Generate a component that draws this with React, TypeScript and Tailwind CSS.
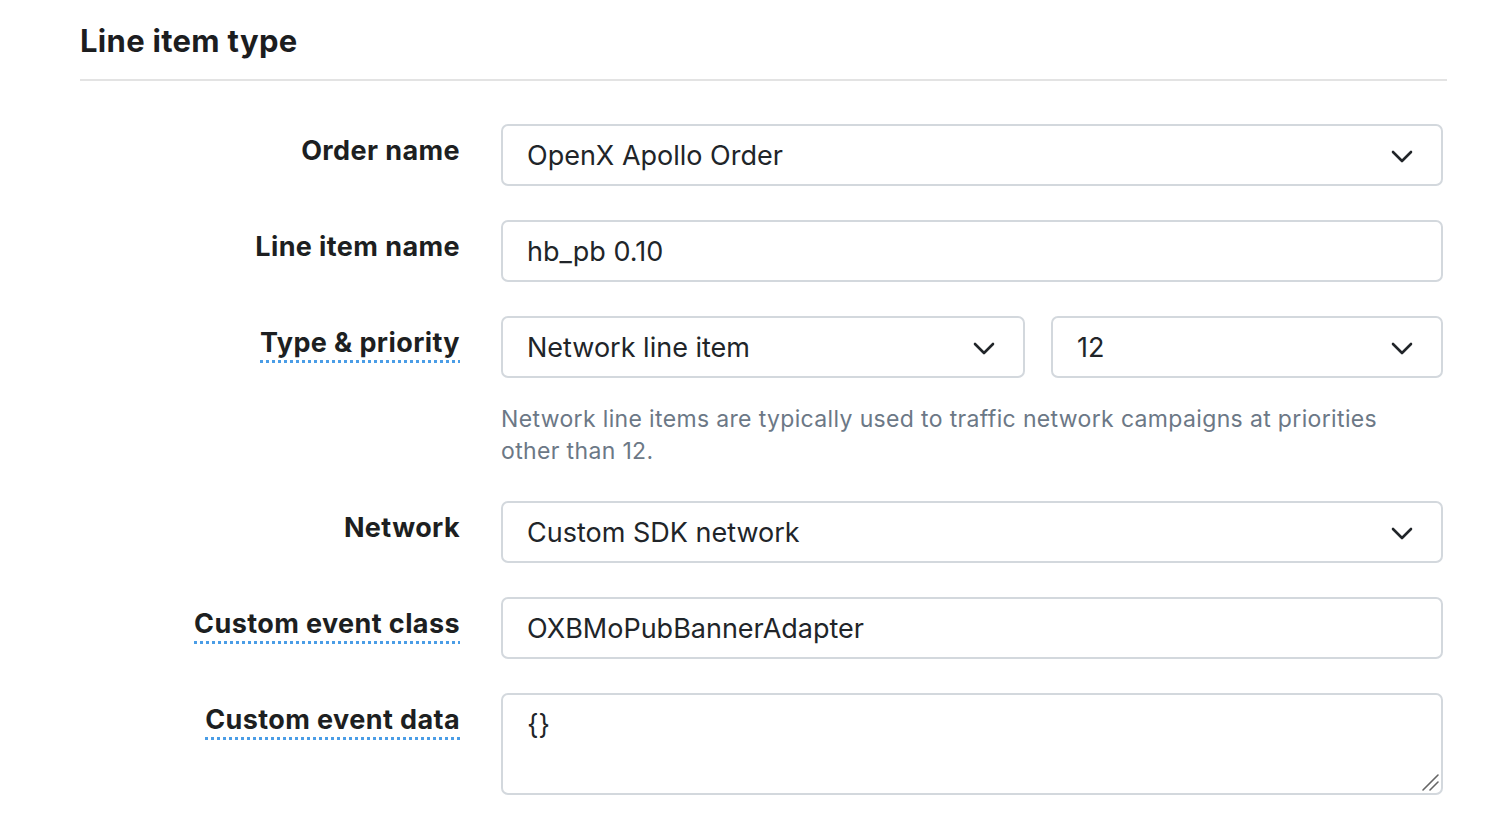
function Chevron() {
  return (
    <svg width="22" height="13" viewBox="0 0 22 13" fill="none" className="shrink-0">
      <path d="M2 2L11 11L20 2" stroke="#212529" strokeWidth="2.6" strokeLinecap="round" strokeLinejoin="round" />
    </svg>
  )
}

function Label({ text, hint }: { text: string; hint?: boolean }) {
  return (
    <div className="flex justify-end">
      <span
        className={
          "text-[27px] font-bold leading-[54px] tracking-[0.4px] text-[#1d1f21] " +
          (hint
            ? "underline decoration-dotted decoration-[#4a9de6] decoration-3 underline-offset-[8px]"
            : "")
        }
      >
        {text}
      </span>
    </div>
  )
}

function SelectBox({ value, className = "" }: { value: string; className?: string }) {
  return (
    <div
      className={
        "flex h-[62px] items-center justify-between rounded-[7px] border-2 border-[#d3d8dd] bg-white pl-[24px] pr-[28px] pt-[2px] " +
        className
      }
    >
      <span className="text-[27px] text-[#212529]">{value}</span>
      <Chevron />
    </div>
  )
}

function TextBox({ value }: { value: string }) {
  return (
    <div className="flex h-[62px] items-center rounded-[7px] border-2 border-[#d3d8dd] bg-white pl-[24px] pt-[2px]">
      <span className="text-[27px] text-[#212529]">{value}</span>
    </div>
  )
}

export default function App() {
  return (
    <div className="min-h-screen bg-white font-['Inter','Noto_Sans',sans-serif]">
      <div className="w-[1447px] pl-[80px] pt-[22px]">
        <h1 className="text-[31px] font-bold leading-[38px] tracking-[0.3px] text-[#1c1d1f]">Line item type</h1>
        <div className="mt-[19px] h-[2px] bg-[#e3e3e3]" />

        <div className="mt-[43px] grid grid-cols-[380px_942px] gap-x-[41px] gap-y-[34px]">
          <Label text="Order name" />
          <SelectBox value="OpenX Apollo Order" />

          <Label text="Line item name" />
          <TextBox value="hb_pb 0.10" />

          <Label text="Type & priority" hint />
          <div>
            <div className="flex gap-[26px]">
              <SelectBox value="Network line item" className="w-[524px]" />
              <SelectBox value="12" className="flex-1" />
            </div>
            <p className="mt-[25px] max-w-[905px] text-[23px] leading-[32px] tracking-[0.35px] text-[#6c7886]">
              Network line items are typically used to traffic network campaigns at priorities other than 12.
            </p>
          </div>

          <Label text="Network" />
          <SelectBox value="Custom SDK network" />

          <Label text="Custom event class" hint />
          <TextBox value="OXBMoPubBannerAdapter" />

          <Label text="Custom event data" hint />
          <div className="relative">
            <textarea
              defaultValue="{}"
              className="block h-[102px] w-full resize-none rounded-[7px] border-2 border-[#d3d8dd] bg-white px-[24px] py-[12px] text-[27px] leading-[36px] text-[#212529] outline-none"
            />
            <svg width="20" height="20" viewBox="0 0 20 20" className="pointer-events-none absolute bottom-[3px] right-[3px]">
              <path d="M3 18L18 3" stroke="#666" strokeWidth="1.6" strokeLinecap="round" />
              <path d="M10 18L18 10" stroke="#666" strokeWidth="1.6" strokeLinecap="round" />
            </svg>
          </div>
        </div>
      </div>
    </div>
  )
}
